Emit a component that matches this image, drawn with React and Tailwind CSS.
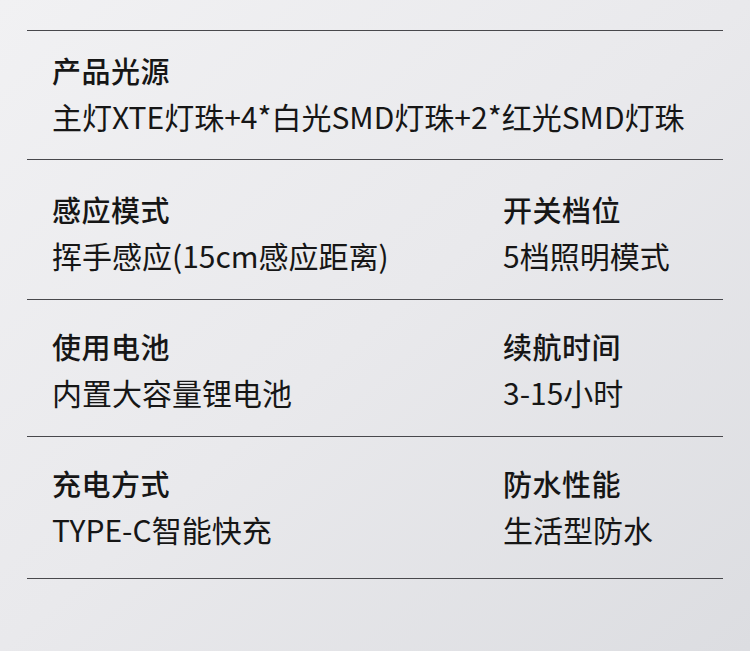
export default function App() {
  const font = { fontFamily: '"Noto Sans CJK SC", "Noto Sans", sans-serif' };
  const rows = [
    { pad: "pt-[16px] pb-[20px]", items: [["产品光源", "主灯XTE灯珠+4*白光SMD灯珠+2*红光SMD灯珠"]] },
    { pad: "pt-[26px] pb-[21px]", items: [["感应模式", "挥手感应(15cm感应距离)"], ["开关档位", "5档照明模式"]] },
    { pad: "pt-[23px] pb-[21px]", items: [["使用电池", "内置大容量锂电池"], ["续航时间", "3-15小时"]] },
    { pad: "pt-[23px] pb-[26px]", items: [["充电方式", "TYPE-C智能快充"], ["防水性能", "生活型防水"]] },
  ];
  return (
    <div
      className="w-[750px] h-[651px] bg-gradient-to-br from-[#f1f1f3] via-[#e9e9ec] to-[#dcdde1] pt-[30px] px-[27px] text-[#161616]"
      style={font}
    >
      <div className="border-t-[1.5px] border-[#48484c]">
        {rows.map((r, i) => (
          <div key={i} className={`flex pl-[25px] border-b-[1.5px] border-[#48484c] ${r.pad}`}>
            {r.items.map(([t, v], j) => (
              <div key={j} className={j === 0 && r.items.length > 1 ? "w-[451px]" : ""}>
                <div className="text-[29px] leading-[46px] font-medium tracking-[0.5px]">{t}</div>
                <div className="text-[30px] leading-[46px] whitespace-nowrap">{v}</div>
              </div>
            ))}
          </div>
        ))}
      </div>
    </div>
  );
}
